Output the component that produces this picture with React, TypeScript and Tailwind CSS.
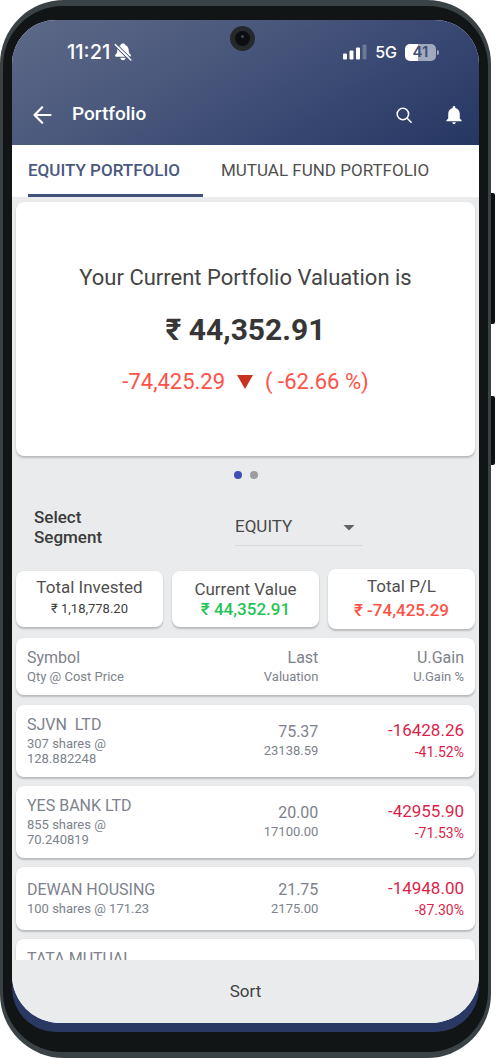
import React from "react";

type Holding = {
  symbol: string;
  qty: string;
  last: string;
  valuation: string;
  gain: string;
  gainPct: string;
};

const holdings: Holding[] = [
  { symbol: "SJVN  LTD", qty: "307 shares @ 128.882248", last: "75.37", valuation: "23138.59", gain: "-16428.26", gainPct: "-41.52%" },
  { symbol: "YES BANK LTD", qty: "855 shares @ 70.240819", last: "20.00", valuation: "17100.00", gain: "-42955.90", gainPct: "-71.53%" },
  { symbol: "DEWAN HOUSING", qty: "100 shares @ 171.23", last: "21.75", valuation: "2175.00", gain: "-14948.00", gainPct: "-87.30%" },
];

const BELL =
  "M256 464c22.779 0 41.411-18.719 41.411-41.6h-82.823c0 22.881 18.633 41.6 41.412 41.6zm134.589-124.8V224.8c0-63.44-44.516-117.518-103.53-131.041V79.2c0-17.682-13.457-31.2-31.059-31.2s-31.059 13.518-31.059 31.2v14.559c-59.015 13.523-103.53 67.601-103.53 131.041v114.4L80 380.8v20.8h352v-20.8l-41.411-41.6z";

const card = "rounded-lg bg-white shadow-[0_2px_2px_rgba(0,0,0,0.2),0_0_2px_rgba(0,0,0,0.06)]";

function StatusBar() {
  return (
    <div className="flex h-16 items-center justify-between pr-10 pl-[55px] font-['Inter',sans-serif] text-white">
      <div className="flex items-center gap-1">
        <span className="text-xl font-medium">11:21</span>
        <svg width="18" height="18" viewBox="0 0 18 18" aria-label="Silent">
          <path
            fill="#fff"
            d="M9 .6c1.400 0 2.300.7 2.500 1.700 2.100.9 3.100 2.700 3.200 4.900.1 2.500.8 3.400 1.800 4.400.9.9.4 2.200-.8 2.200H2.300c-1.200 0-1.700-1.300-.8-2.200 1-1 1.700-1.900 1.800-4.400.1-2.200 1.100-4 3.200-4.900C6.700 1.300 7.600.6 9 .6zM6.300 14.800h5.400c-.2 1.400-1.300 2.400-2.700 2.400s-2.500-1-2.700-2.400z"
          />
          <path d="M2 .4 18 16.200M.2 2.200 16 18" stroke="#55628a" strokeWidth="1.100" />
          <path d="M1.200 1.400 16.900 16.900" stroke="#fff" strokeWidth="1.400" strokeLinecap="round" />
        </svg>
      </div>
      <div className="flex items-center gap-2">
        <svg width="24" height="16" viewBox="0 0 24 16" fill="#fff" aria-label="Signal">
          <rect x="0" y="9.500" width="4" height="6" rx="1" />
          <rect x="6.500" y="6.500" width="4" height="9" rx="1" />
          <rect x="13" y="3.500" width="4" height="12" rx="1" />
          <rect x="19.500" y="0.500" width="4" height="15" rx="1" opacity="0.250" />
        </svg>
        <span className="text-base font-medium">5G</span>
        <div className="flex items-center">
          <div className="flex h-[17px] w-[31px] items-center justify-center rounded-[5px] bg-[linear-gradient(90deg,#fff_42%,#a1a9bf_42%)] text-[15px] font-semibold text-[#3f4e79]">
            41
          </div>
          <div className="ml-px h-[5px] w-[2px] rounded-r-sm bg-[#a1a9bf]" />
        </div>
      </div>
    </div>
  );
}

function AppBar() {
  return (
    <div className="flex h-[61px] items-center pr-[14px] pl-5 text-white">
      <button aria-label="Back" className="flex">
        <svg width="20" height="20" viewBox="0 0 20 20" fill="none" stroke="#fff" strokeWidth="2.200" strokeLinecap="round" strokeLinejoin="round">
          <path d="M18.500 10H2.500M10.200 2.300 2.500 10l7.700 7.700" />
        </svg>
      </button>
      <h1 className="ml-5 flex-1 text-[19px] font-medium">Portfolio</h1>
      <button aria-label="Search" className="flex">
        <svg width="18" height="18" viewBox="0 0 18 18" fill="none" stroke="#fff" strokeWidth="1.600" strokeLinecap="round">
          <circle cx="7.900" cy="8" r="5.700" />
          <path d="m12.200 12.300 3.900 3.900" />
        </svg>
      </button>
      <button aria-label="Notifications" className="ml-[30px] flex">
        <svg width="22" height="22" viewBox="0 0 512 512" fill="#fff">
          <path d={BELL} />
        </svg>
      </button>
    </div>
  );
}

function Cell({ top, bottom, tone }: { top: string; bottom: string; tone?: "loss" }) {
  return (
    <td className={tone === "loss" ? "pb-0.5 text-right text-[#dc1f4b]" : "text-right text-[#7d828c]"}>
      <div className={tone === "loss" ? "text-[17px] leading-6" : "text-base leading-5"}>{top}</div>
      <div className={tone === "loss" ? "text-sm leading-5" : "text-[13px] leading-[18px]"}>{bottom}</div>
    </td>
  );
}

const row = "grid grid-cols-3 items-center px-[11px] " + card;

function HoldingsTable() {
  return (
    <table className="flex flex-col gap-2.5 text-[#7d828c]">
      <thead className="block">
        <tr className={"h-[57px] " + row}>
          {[
            ["Symbol", "Qty @ Cost Price"],
            ["Last", "Valuation"],
            ["U.Gain", "U.Gain %"],
          ].map(([a, b], i) => (
            <th key={a} scope="col" className={i === 0 ? "text-left font-normal" : "text-right font-normal"}>
              <div className="text-base leading-5">{a}</div>
              <div className="text-[13px] leading-[18px]">{b}</div>
            </th>
          ))}
        </tr>
      </thead>
      <tbody className="flex flex-col gap-[9px]">
        {holdings.map((h) => (
          <tr key={h.symbol} className={"min-h-[63px] " + row}>
            <th scope="row" className="pt-[9px] pb-[11px] text-left font-normal">
              <div className="text-base leading-[22px] whitespace-pre">{h.symbol}</div>
              <div className="pr-4 text-[13px] leading-[15px]">{h.qty}</div>
            </th>
            <Cell top={h.last} bottom={h.valuation} />
            <Cell top={h.gain} bottom={h.gainPct} tone="loss" />
          </tr>
        ))}
        <tr className={"min-h-[63px] " + row}>
          <th scope="row" className="self-start pt-[9px] text-left text-base leading-[22px] font-normal whitespace-nowrap">
            TATA MUTUAL
          </th>
        </tr>
      </tbody>
    </table>
  );
}

function Stat({ label, value, valueClass, tall }: { label: string; value: string; valueClass: string; tall?: boolean }) {
  return (
    <div className={"flex flex-col items-center justify-center text-center " + (tall ? "h-[60px] gap-1 pb-0.5 " : "h-14 ") + card}>
      <div className="text-[17px] leading-5 text-[#505050]">{label}</div>
      <div className={valueClass}>{value}</div>
    </div>
  );
}

export default function App() {
  return (
    <div className="relative h-dvh bg-white pr-[5px] font-['Roboto',sans-serif]">
      <div className="absolute top-[193px] right-px h-[131px] w-[8px] rounded-[2px] bg-[#0d1012]" />
      <div className="absolute top-[396px] right-px h-[69px] w-[8px] rounded-[2px] bg-[#0d1012]" />
      <div className="relative flex h-full flex-col rounded-[64px] bg-[#3a4246] px-[3px] pt-[6px] pb-[6px]">
        <div className="flex min-h-0 flex-1 flex-col rounded-[60px] bg-[#111516] px-[9px] pt-[14px] pb-[20px]">
          <div className="flex min-h-0 flex-1 flex-col overflow-hidden rounded-[44px] bg-[#293964] pb-[9px]">
            <div className="flex min-h-0 flex-1 flex-col overflow-hidden rounded-b-[48px] bg-[#eaebed]">
              <header className="bg-[linear-gradient(150deg,#5d6987_0%,#4a587c_38%,#374671_70%,#263662_100%)]">
                <StatusBar />
                <AppBar />
              </header>
              <nav className="flex h-[52px] bg-white pl-4 text-[17px]">
                <a href="#equity" className="flex w-[175px] items-center border-b-[3px] border-[#42507a] pt-0.5 font-medium whitespace-nowrap text-[#4a5880]">
                  EQUITY PORTFOLIO
                </a>
                <a href="#mutual" className="ml-[18px] flex items-center border-b-[3px] border-transparent pt-0.5 whitespace-nowrap text-[#505050]">
                  MUTUAL FUND PORTFOLIO
                </a>
              </nav>
              <main className="flex min-h-0 flex-1 flex-col overflow-y-auto px-1 pt-[5px] [scrollbar-width:none]">
                <section className={"flex h-[254px] shrink-0 flex-col items-center justify-center pt-px " + card}>
                  <h2 className="text-[22px] leading-7 text-[#444]">Your Current Portfolio Valuation is</h2>
                  <p className="mt-5 text-[30px] leading-9 font-bold text-[#363636]">₹ 44,352.91</p>
                  <p className="mt-5 flex items-center gap-3 text-[22px] leading-7 text-[#ff5147]">
                    <span>-74,425.29</span>
                    <svg width="16" height="14" viewBox="0 0 16 14" fill="#cb3120">
                      <path d="M0 0h16L8 14z" />
                    </svg>
                    <span>( -62.66 %)</span>
                  </p>
                </section>
                <div className="flex shrink-0 justify-center gap-2 pt-[15px]">
                  <span className="size-2 rounded-full bg-[#3f51b5]" />
                  <span className="size-2 rounded-full bg-[#9e9e9e]" />
                </div>
                <div className="flex shrink-0 items-center pt-7 pb-[22px] pl-[18px]">
                  <label htmlFor="segment" className="w-[201px] pr-24 text-[17px] leading-5 font-medium text-[#3b3b3b]">
                    Select Segment
                  </label>
                  <div className="relative w-32 border-b border-[#d8d9db]">
                    <select id="segment" defaultValue="EQUITY" className="h-9 w-full appearance-none bg-transparent text-[17px] text-[#484848]">
                      <option>EQUITY</option>
                    </select>
                    <svg className="pointer-events-none absolute top-4 right-2" width="12" height="6" viewBox="0 0 12 6" fill="#626262">
                      <path d="M.5 0h11L6 5.500z" />
                    </svg>
                  </div>
                </div>
                <div className="mb-[9px] grid shrink-0 grid-cols-3 items-center gap-[9px]">
                  <Stat label="Total Invested" value="₹ 1,18,778.20" valueClass="text-[13px] leading-6 text-[#404040]" />
                  <Stat label="Current Value" value="₹ 44,352.91" valueClass="text-[17px] leading-5 font-medium text-[#1fc455]" />
                  <Stat tall label="Total P/L" value="₹ -74,425.29" valueClass="text-[17px] leading-5 font-medium text-[#ff5147]" />
                </div>
                <HoldingsTable />
              </main>
              <footer className="flex h-[63px] shrink-0 items-center justify-center bg-[#eaebed]">
                <button className="text-[17px] text-[#404040]">Sort</button>
              </footer>
            </div>
          </div>
        </div>
        <div className="absolute top-[26px] left-[230px] flex size-[25px] items-center justify-center rounded-full bg-[#24292b]">
          <div className="flex size-[15px] justify-center rounded-full bg-[#0c0f11] pt-[4px]">
            <div className="size-[3px] rounded-full bg-[#454c52]" />
          </div>
        </div>
      </div>
    </div>
  );
}
